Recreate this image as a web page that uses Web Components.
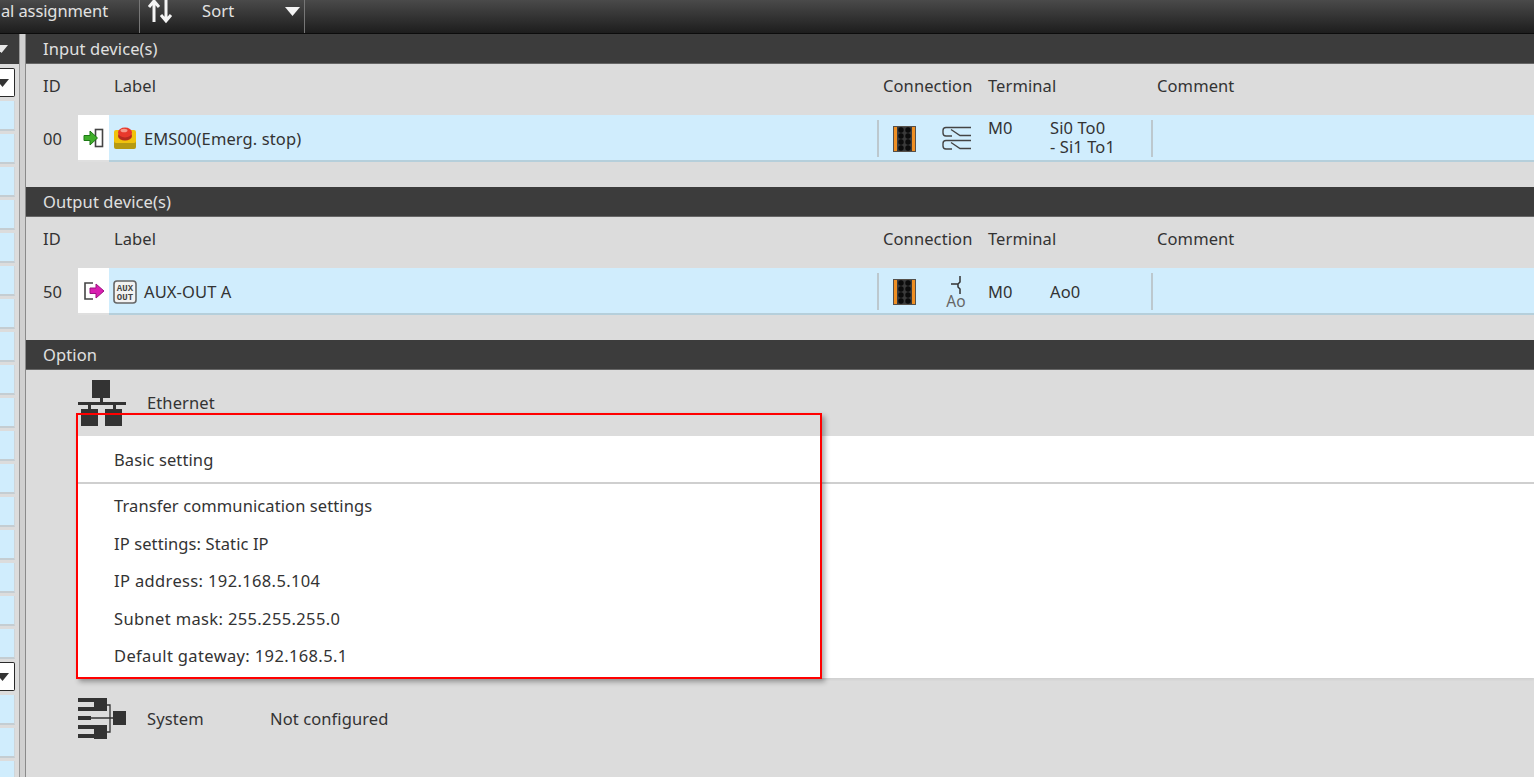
<!DOCTYPE html>
<html>
<head>
<meta charset="utf-8">
<title>Device configuration</title>
<style>
  html, body { margin: 0; height: 100%; overflow: hidden; background: #dcdcdc; }
  body { font: 16.5px "Noto Sans", "Open Sans", sans-serif; letter-spacing: .1px; color: #333; }
  .page { display: flex; flex-direction: column; height: 777px; position: relative; }
  .body { display: flex; flex: 1; min-height: 0; }
  .main { flex: 1; min-width: 0; }
  settings-panel p.num { letter-spacing: .36px; }
</style>
</head>
<body>
<template id="t-toolbar">
  <style>
    :host { display: flex; height: 33px; border-bottom: 1px solid #0c0c0c; color: #e2e2e2;
      background: linear-gradient(#4a4a4a, #1d1d1d); flex: none; overflow: hidden; }
    .cell { display: flex; align-items: center; height: 100%; box-sizing: border-box; border-right: 1px solid #777; padding-bottom: 11px; }
    .assign { width: 140px; padding-right: 31px; white-space: nowrap; justify-content: flex-end; letter-spacing: -.1px; }
    .assign span, .sort span { margin-bottom: 2px; }
    .sort { width: 165px; padding-left: 7px; }
    .sort span { margin-left: 29px; flex: 1; }
    .sort svg:last-child { margin-right: 4px; }
  </style>
  <div class="cell assign"><span>al assignment</span></div>
  <div class="cell sort">
    <svg width="26" height="26" viewBox="0 0 26 26"><path d="M7 24V4M2 9l5-6 5 6M19 2v20M14 17l5 6 5-6" fill="none" stroke="#f4f4f4" stroke-width="3"/></svg>
    <span>Sort</span>
    <svg width="15" height="9" viewBox="0 0 15 9"><path d="M0 0h15L7.5 9z" fill="#f4f4f4"/></svg>
  </div>
</template>

<template id="t-side">
  <style>
    :host { display: flex; flex-direction: column; width: 19px; flex: none; overflow: hidden; }
    .head { height: 30px; background: #3c3c3c; display: flex; align-items: center; flex: none; }
    .head svg { margin-left: -5px; }
    .list { display: flex; flex-direction: column; padding: 4px 4px 0 0; }
    .drop { height: 29px; margin-bottom: 4px; box-sizing: border-box; background: #fff; border: 1.5px solid #2a2a2a;
      border-left: 0; border-radius: 0 2px 2px 0; display: flex; align-items: center; flex: none; }
    .drop svg { margin-left: -4px; }
    .item { height: 30px; margin-bottom: 3px; box-sizing: border-box; background: #d0edfd; flex: none;
      border-bottom: 2px solid #c4cdd2; border-right: 1px solid #cfd6da; }
  </style>
  <div class="head"><svg width="13" height="8" viewBox="0 0 13 8"><path d="M0 0h13L6.5 8z" fill="#e8e8e8"/></svg></div>
  <div class="list"></div>
</template>

<template id="t-splitter">
  <style>
    :host { display: block; width: 7px; flex: none; box-sizing: border-box; background: #d0d0d0;
      border-left: 1px solid #9a9a9a; border-right: 1px solid #8a8a8a; }
  </style>
</template>

<template id="t-title">
  <style>
    :host { display: block; height: 30px; box-sizing: border-box; background: #3c3c3c; color: #e0e0e0; padding-left: 17px;
      line-height: 30px; border-bottom: 1px solid #666; }
  </style>
  <slot></slot>
</template>

<template id="t-section">
  <style>
    :host { display: block; }
    .cols { display: grid; grid-template-columns: 88px 769px 105px 169px 1fr; height: 51px; align-items: center; padding-bottom: 8px; box-sizing: border-box; }
    .cols span:first-child { padding-left: 17px; }
    .gap { height: 25px; }
  </style>
  <section-title><slot name="title"></slot></section-title>
  <div class="cols"><span>ID</span><span>Label</span><span>Connection</span><span>Terminal</span><span>Comment</span></div>
  <slot></slot>
  <div class="gap"></div>
</template>

<template id="t-row">
  <style>
    :host { display: grid; grid-template-columns: 52px 31px 34px 735px 63px 47px 62px 101px 1fr; align-items: center;
      height: 47px; line-height: 19px; }
    .id { height: 100%; display: flex; align-items: center; padding: 0 0 1px 17px; box-sizing: border-box; }
    .io { height: 100%; box-sizing: border-box; background: #fff; border-bottom: 2px solid #dfdfdf; display: flex; align-items: center; justify-content: center; }
    .fill { grid-column: 3 / -1; grid-row: 1; height: 100%; box-sizing: border-box; background: #d0edfd; border-bottom: 2px solid #b5cfdb; }
    .icon, .label, .block, .contact, .mod, .term, .comment { grid-row: 1; position: relative; display: flex; align-items: center; }
    .icon { grid-column: 3; padding-left: 4px; }
    .label { grid-column: 4; white-space: nowrap; padding: 0 0 1px 1px; }
    .block { grid-column: 5; height: 37px; border-left: 2px solid #bcc8ce; box-sizing: border-box; padding-left: 14px; margin-left: -1px; }
    .contact { grid-column: 6; }
    .mod { grid-column: 7; align-self: start; padding-top: var(--mod-top, 3px); }
    .term { grid-column: 8; margin-top: var(--term-shift, 0); }
    .comment { grid-column: 9; height: 37px; border-left: 2px solid #bcc8ce; }
  </style>
  <div class="id"></div>
  <div class="io"><slot name="io"></slot></div>
  <div class="fill"></div>
  <div class="icon"><slot name="icon"></slot></div>
  <div class="label"></div>
  <div class="block">
    <svg width="23" height="26" viewBox="0 0 23 26">
      <rect width="23" height="26" fill="#55504a"/>
      <rect x="1" y="1" width="3" height="24" fill="#ef8f23"/><rect x="19" y="1" width="3" height="24" fill="#ef8f23"/>
      <rect x="4" y="1" width="15" height="24" fill="#3a3a3a"/>
      <g fill="#0c0c0c"><circle cx="8" cy="4" r="2.700"/><circle cx="15" cy="4" r="2.700"/><circle cx="8" cy="10" r="2.700"/><circle cx="15" cy="10" r="2.700"/><circle cx="8" cy="16" r="2.700"/><circle cx="15" cy="16" r="2.700"/><circle cx="8" cy="22" r="2.700"/><circle cx="15" cy="22" r="2.700"/></g>
    </svg>
  </div>
  <div class="contact"><slot name="contact"></slot></div>
  <div class="mod"></div>
  <div class="term"></div>
  <div class="comment"></div>
</template>

<template id="t-option">
  <style>
    :host { display: flex; align-items: center; height: var(--h, 66px); padding-left: 52px; }
    .ico { width: 48px; height: 48px; flex: none; display: flex; }
    .name { width: 123px; margin-left: 21px; }
    .name, .val { margin-bottom: 2px; }
  </style>
  <div class="ico"><slot name="icon"></slot></div>
  <div class="name"><slot></slot></div>
  <div class="val"><slot name="value"></slot></div>
</template>

<template id="t-panel">
  <style>
    :host { display: block; background: #fff; height: 242px; margin-left: 52px; box-shadow: 0 2px 2px rgba(0,0,0,.05); }
    .head { height: 48px; box-sizing: border-box; border-bottom: 2px solid #cfcfcf; padding-left: 36px; display: flex; align-items: center; }
    ::slotted(p) { margin: 0; height: 37.5px; line-height: 37.5px; padding-left: 36px; }
    .rows { padding-top: 3px; }
  </style>
  <div class="head"><slot name="head"></slot></div>
  <div class="rows"><slot></slot></div>
</template>

<template id="t-callout">
  <style>
    :host { display: block; position: absolute; left: 76px; top: 413px; width: 746px; height: 266px; box-sizing: border-box;
      border: 2.4px solid #f00; box-shadow: 3px 3px 5px rgba(0,0,0,.32); pointer-events: none; }
  </style>
</template>

<script>
function mount(el, id) {
  el.attachShadow({ mode: 'open' }).appendChild(document.getElementById(id).content.cloneNode(true));
  return el.shadowRoot;
}

class AppToolbar extends HTMLElement {
  constructor() { super(); mount(this, 't-toolbar'); }
}
customElements.define('app-toolbar', AppToolbar);

class SideList extends HTMLElement {
  constructor() {
    super();
    const root = mount(this, 't-side');
    const list = root.querySelector('.list');
    const arrow = '<svg width="13" height="8" viewBox="0 0 13 8"><path d="M0 0h13L6.5 8z" fill="#333"/></svg>';
    // one dropdown, 17 rows, second dropdown, rest of the rows
    const parts = ['d', ...Array(17).fill('i'), 'd', 'i', 'i', 'i'];
    parts.forEach(p => {
      const div = document.createElement('div');
      div.className = p === 'd' ? 'drop' : 'item';
      if (p === 'd') div.innerHTML = arrow;
      list.appendChild(div);
    });
  }
}
customElements.define('side-list', SideList);

class PaneSplitter extends HTMLElement {
  constructor() { super(); mount(this, 't-splitter'); }
}
customElements.define('pane-splitter', PaneSplitter);

class SectionTitle extends HTMLElement {
  constructor() { super(); mount(this, 't-title'); }
}
customElements.define('section-title', SectionTitle);

class DeviceSection extends HTMLElement {
  constructor() { super(); mount(this, 't-section'); }
}
customElements.define('device-section', DeviceSection);

class DeviceRow extends HTMLElement {
  constructor() { super(); mount(this, 't-row'); }
  connectedCallback() {
    const root = this.shadowRoot;
    root.querySelector('.id').textContent = this.getAttribute('no');
    root.querySelector('.label').textContent = this.getAttribute('label');
    root.querySelector('.mod').textContent = this.getAttribute('module');
    root.querySelector('.term').innerHTML = this.getAttribute('terminal');
  }
}
customElements.define('device-row', DeviceRow);

class OptionRow extends HTMLElement {
  constructor() { super(); mount(this, 't-option'); }
}
customElements.define('option-row', OptionRow);

class SettingsPanel extends HTMLElement {
  constructor() { super(); mount(this, 't-panel'); }
}
customElements.define('settings-panel', SettingsPanel);

class CalloutBox extends HTMLElement {
  constructor() { super(); mount(this, 't-callout'); }
}
customElements.define('callout-box', CalloutBox);
</script>

<div class="page">
  <app-toolbar></app-toolbar>
  <div class="body">
    <side-list></side-list>
    <pane-splitter></pane-splitter>
    <div class="main">
      <device-section>
        <span slot="title">Input device(s)</span>
        <device-row no="00" label="EMS00(Emerg. stop)" module="M0" terminal="Si0 To0<br>- Si1 To1" style="--term-shift:-4px">
          <svg slot="io" width="22" height="20" viewBox="0 0 22 20">
            <rect x="12.500" y="1.500" width="7" height="17" fill="#fff" stroke="#444" stroke-width="1.6"/>
            <path d="M1 7.500h6V3l7.500 7L7 17v-4.500H1z" fill="#3fae2a" stroke="#1c7a14"/>
          </svg>
          <svg slot="icon" width="24" height="24" viewBox="0 0 24 24">
            <path d="M1 7h22v13q0 2-2 2H3q-2 0-2-2z" fill="#b69a10"/>
            <path d="M1 5q0-2 2-2h18q2 0 2 2v9q0 2-2 2H3q-2 0-2-2z" fill="#f0c20c"/>
            <ellipse cx="12" cy="9" rx="7" ry="4.500" fill="#b52a20"/>
            <ellipse cx="12" cy="5.500" rx="7" ry="5" fill="#e8392c"/>
            <ellipse cx="11" cy="3.500" rx="3.500" ry="1.800" fill="#f59a8c"/>
          </svg>
          <svg slot="contact" width="32" height="26" viewBox="0 0 32 26" fill="none" stroke="#444" stroke-width="1.4">
            <path d="M30 1.500H5Q2 1.500 2 4.500V7Q2 10 5 10H11M10 3.500L19 9.500H30"/>
            <path d="M30 14.500H5Q2 14.500 2 17.500V20Q2 23 5 23H11M10 16.500L19 22.500H30"/>
          </svg>
        </device-row>
      </device-section>
      <device-section>
        <span slot="title">Output device(s)</span>
        <device-row no="50" label="AUX-OUT A" module="M0" terminal="Ao0" style="--mod-top:14px;--term-shift:-1px">
          <svg slot="io" width="22" height="20" viewBox="0 0 22 20">
            <path d="M10 2H2v16h8" fill="none" stroke="#444" stroke-width="1.6"/>
            <path d="M7 7h6V3l8 7-8 7v-4.500H7z" fill="#d91fb1" stroke="#9c1480"/>
          </svg>
          <svg slot="icon" width="24" height="24" viewBox="0 0 24 24">
            <rect x="1" y="1" width="22" height="22" rx="3" fill="#f2f2f2" stroke="#666" stroke-width="1.6"/>
            <text x="12" y="10.500" font-family="Liberation Mono" font-size="9" font-weight="700" text-anchor="middle" fill="#444">AUX</text>
            <text x="12" y="20" font-family="Liberation Mono" font-size="9" font-weight="700" text-anchor="middle" fill="#444">OUT</text>
          </svg>
          <svg slot="contact" width="26" height="38" viewBox="0 0 26 38" style="margin-left:2px">
            <path d="M17 3v6l-2 2v3l2 2v5M8 11h7" fill="none" stroke="#333" stroke-width="1.5"/>
            <text x="13" y="34" font-family="Noto Sans" font-size="15.500" text-anchor="middle" fill="#666">Ao</text>
          </svg>
        </device-row>
      </device-section>
      <section-title>Option</section-title>
      <option-row>
        <svg slot="icon" width="48" height="48" viewBox="0 0 48 48" fill="#333">
          <rect x="14" y="1" width="18" height="18"/>
          <rect x="22" y="19" width="3" height="5"/>
          <rect y="23" width="48" height="3"/>
          <rect x="10" y="26" width="3" height="5"/><rect x="35" y="26" width="3" height="5"/>
          <rect x="3" y="30" width="17" height="17"/><rect x="27" y="30" width="17" height="17"/>
        </svg>
        Ethernet
      </option-row>
      <settings-panel>
        <span slot="head">Basic setting</span>
        <p>Transfer communication settings</p>
        <p>IP settings: Static IP</p>
        <p class="num">IP address: 192.168.5.104</p>
        <p class="num">Subnet mask: 255.255.255.0</p>
        <p class="num">Default gateway: 192.168.5.1</p>
      </settings-panel>
      <option-row style="--h:82px">
        <svg slot="icon" width="48" height="48" viewBox="0 0 48 48" fill="#333">
          <rect x="16" y="3" width="13" height="13"/><rect x="16" y="30" width="13" height="14"/><rect x="35" y="16" width="13" height="14"/>
          <rect y="3" width="16" height="4"/><rect y="12" width="16" height="4"/><rect y="21" width="13" height="4"/><rect y="30" width="16" height="4"/><rect y="39" width="16" height="4"/>
          <path d="M13 23h22M29 10h3v27h-3" fill="none" stroke="#333" stroke-width="1.3"/>
        </svg>
        System
        <span slot="value">Not configured</span>
      </option-row>
    </div>
  </div>
  <callout-box></callout-box>
</div>
</body>
</html>
